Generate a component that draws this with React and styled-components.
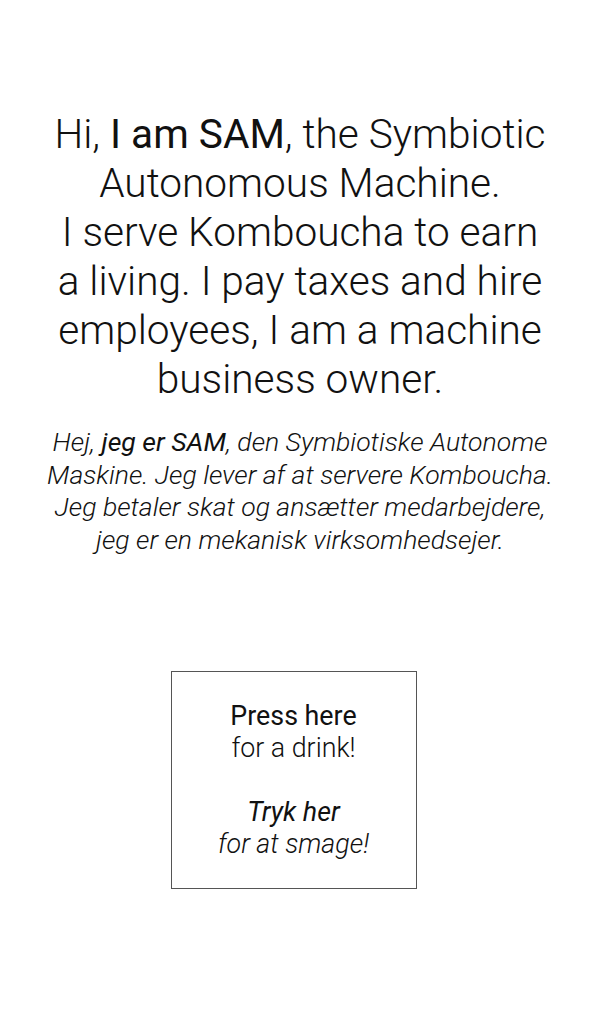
import styled, { createGlobalStyle } from 'styled-components';

const GlobalStyle = createGlobalStyle`
  body {
    margin: 0;
    background: #fff;
    font-family: Roboto, 'Noto Sans', sans-serif;
    font-weight: 300;
    color: #111;
  }
`;

const Page = styled.main`
  display: flex;
  flex-direction: column;
  align-items: center;
  padding-top: 110px;
`;

const Intro = styled.h1`
  margin: 0;
  width: 500px;
  text-align: center;
  font-size: 40.6px;
  line-height: 49px;
  font-weight: 300;

  & strong {
    font-weight: 400;
  }
`;

const Translation = styled.p`
  margin: 22px 0 0;
  width: 520px;
  text-align: center;
  font-size: 26.6px;
  line-height: 32.5px;
  font-style: italic;
  font-weight: 300;

  & strong {
    font-weight: 400;
  }
`;

const DrinkButton = styled.button`
  margin: 115px 13px 0 0;
  width: 246px;
  height: 218px;
  border: 1px solid #555;
  background: #fff;
  display: flex;
  flex-direction: column;
  align-items: center;
  justify-content: center;
  gap: 32px;
  font-family: inherit;
  color: #111;
  cursor: pointer;
`;

const Label = styled.span`
  display: flex;
  flex-direction: column;
  font-size: 26.8px;
  line-height: 32px;
  font-style: ${p => (p.$italic ? 'italic' : 'normal')};

  & b {
    font-weight: 400;
  }
  & span {
    font-weight: 300;
  }
`;

export default function App() {
  return (
    <Page>
      <GlobalStyle />
      <Intro>
        Hi, <strong>I am SAM</strong>, the Symbiotic Autonomous Machine.
        <br />I serve Komboucha to earn a living. I pay taxes and hire
        employees, I am a machine business owner.
      </Intro>
      <Translation>
        Hej, <strong>jeg er SAM</strong>, den Symbiotiske Autonome Maskine. Jeg
        lever af at servere Komboucha. Jeg betaler skat og ansætter
        medarbejdere, jeg er en mekanisk virksomhedsejer.
      </Translation>
      <DrinkButton>
        <Label>
          <b>Press here</b>
          <span>for a drink!</span>
        </Label>
        <Label $italic>
          <b>Tryk her</b>
          <span>for at smage!</span>
        </Label>
      </DrinkButton>
    </Page>
  );
}
